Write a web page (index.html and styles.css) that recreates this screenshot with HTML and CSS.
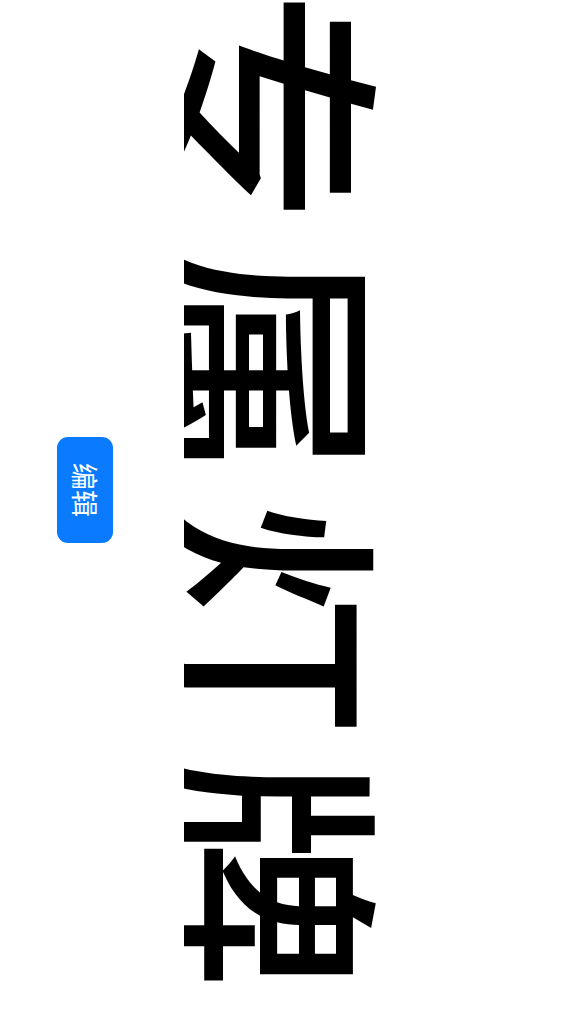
FILE: index.html
```html
<!DOCTYPE html>
<html lang="zh">
<head>
<meta charset="utf-8">
<link rel="stylesheet" href="styles.css">
</head>
<body>
<div class="page">
  <div class="side">
    <button class="edit-btn">编辑</button>
  </div>
  <div class="title"><span class="title-text">专属灯牌</span></div>
</div>
</body>
</html>
```
FILE: styles.css
```css
html, body {
  margin: 0;
  padding: 0;
  background: #ffffff;
}
.page {
  display: flex;
  width: 576px;
  height: 1024px;
  overflow: hidden;
  font-family: "Noto Sans CJK SC", "Noto Sans", sans-serif;
}
.side {
  padding-left: 57px;
  padding-top: 437px;
}
.edit-btn {
  width: 56px;
  height: 106px;
  border: none;
  border-radius: 11px;
  background: #0a7bff;
  color: #ffffff;
  padding: 0;
  font-family: "Noto Sans CJK SC", sans-serif;
  font-size: 27px;
  line-height: 1;
  writing-mode: vertical-rl;
  text-orientation: sideways;
  display: flex;
  align-items: center;
  justify-content: center;
}
.title {
  margin-left: 71px;
  width: 212px;
  height: 1024px;
  overflow: hidden;
  writing-mode: vertical-rl;
  text-orientation: sideways;
  font-size: 235px;
  font-weight: 500;
  line-height: 1;
  letter-spacing: 20px;
  color: #000000;
  white-space: nowrap;
}
.title-text {
  display: block;
  margin-top: -10px;
}
```
